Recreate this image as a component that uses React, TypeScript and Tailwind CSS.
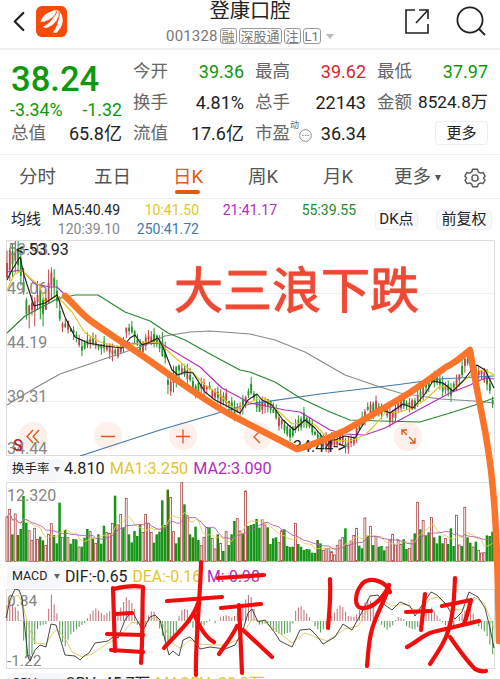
import { ChevronLeft } from "lucide-react";

type Point = [number, number];

const cjk = "font-[Roboto,'Noto_Sans_CJK_SC',sans-serif]";

const PITCH = 2.775;

// bar tops on a 0-258 scale, "r" = rising day, "g" = falling day
const volumes =
  "126r 103r 178g 117r 180g 162g 63g 143g 167r 196r 160r 193r 185g 196g 211r 178r 146r 180g 205g 83g 187r 165g 188r 206g 192g 193g 216r 215g 188g 162g 170r 188g 205r 178g 206g 152g 172r 175r 145r 62g 150r 118r 157g 70r 178g 202g 168g 183g 150g 172r 118r 146r 172r 203g 178g 170g 76g 150g 44g 67r 170r 205g 187g 23r 88g 122r 178g 187g 155g 195g 212r 187r 157r 158g 190r 222r 178g 205r 228g 170r 210g 178g 138g 131r 168r 175g 48r 153g 150g 147g 132g 158g 134r 150r 157g 207g 190g 187g 203r 167r 163g 213g 216g 215g 145r 207g 215g 225g 222g 223g 233g 234g 195g 205g 226r 221r 221r 230r 240r 211r 195r 188r 160g 211r 198r 181r 160r 212g 220g 129r 182g 154r 210g 184r 215g 213g 226g 216r 195r 178r 210r 196r 208r 193g 222g 220r 195r 175g 82r 163g 136r 183g 172g 128r 187g 205g 182g 205g 190r 207g 160g 213g 121r 210r 213g 97r 187g 203g 216r 200g 226r 234r 233r 181g 183g 170g"
    .split(" ")
    .map((v) => ({ top: parseInt(v, 10), up: v.endsWith("r") }));

const pricePath: Point[] = [
  [7, 270], [10, 260], [16, 255], [20, 262], [23, 282], [26, 304], [29, 308], [33, 308], [38, 296], [45, 308],
  [48, 295], [51, 280], [54, 280], [57, 296], [60, 316], [63, 328], [68, 326], [75, 336], [82, 346], [90, 342],
  [105, 345], [118, 354], [124, 342], [127, 328], [133, 332], [140, 350], [148, 338], [155, 338], [160, 346],
  [165, 355], [168, 385], [172, 385], [180, 368], [190, 378], [195, 390], [208, 387], [215, 396], [226, 400],
  [235, 413], [242, 406], [248, 392], [252, 390], [258, 407], [266, 402], [275, 413], [285, 430], [293, 432],
  [298, 423], [305, 418], [312, 430], [322, 441], [333, 443], [340, 438], [348, 447], [355, 437], [362, 420],
  [366, 412], [374, 406], [384, 410], [390, 416], [397, 410], [403, 400], [412, 405], [418, 400], [425, 387],
  [432, 376], [440, 383], [451, 392], [457, 382], [465, 362], [470, 358], [476, 370], [483, 373], [490, 388], [494, 406],
];

const averages: { color: string; points: Point[] }[] = [
  {
    color: "#888888",
    points: [[7, 405], [35, 388], [60, 374], [110, 357], [140, 347], [165, 336], [190, 332], [210, 331], [250, 334], [275, 340], [305, 352], [345, 375], [380, 387], [400, 393], [440, 399], [475, 401], [494, 403]],
  },
  {
    color: "#3f79ad",
    points: [[80, 456], [160, 430], [225, 411], [250, 404], [320, 394], [395, 385], [440, 379], [494, 376]],
  },
  {
    color: "#26882c",
    points: [[7, 333], [25, 316], [57, 299], [75, 295], [98, 295], [125, 312], [150, 321], [168, 333], [185, 340], [210, 354], [240, 370], [250, 372], [275, 382], [300, 398], [330, 412], [350, 420], [380, 421], [420, 422], [450, 413], [475, 405], [494, 398]],
  },
  {
    color: "#b52bc0",
    points: [[7, 272], [22, 270], [35, 284], [50, 287], [57, 287], [65, 295], [85, 314], [110, 335], [130, 343], [145, 344], [160, 343], [175, 352], [200, 367], [222, 388], [250, 403], [285, 410], [300, 412], [330, 430], [345, 434], [365, 435], [385, 428], [420, 409], [450, 393], [470, 385], [485, 378], [494, 379]],
  },
  {
    color: "#e2c51c",
    points: [[7, 290], [14, 275], [22, 270], [30, 278], [40, 286], [45, 302], [57, 296], [72, 312], [85, 333], [100, 342], [120, 347], [135, 344], [150, 342], [160, 343], [172, 355], [190, 370], [205, 385], [220, 395], [235, 410], [245, 405], [255, 400], [265, 398], [275, 408], [292, 424], [300, 423], [315, 425], [330, 440], [350, 441], [365, 435], [375, 425], [385, 413], [400, 412], [412, 408], [425, 400], [440, 386], [455, 388], [465, 380], [475, 371], [485, 370], [494, 375]],
  },
  {
    color: "#1c1c1c",
    points: [[7, 280], [12, 270], [20, 257], [24, 275], [34, 306], [45, 303], [57, 295], [65, 317], [75, 337], [88, 343], [105, 346], [122, 348], [130, 338], [135, 335], [142, 345], [150, 342], [158, 338], [163, 347], [172, 370], [178, 375], [185, 372], [193, 373], [205, 392], [215, 400], [225, 405], [240, 413], [248, 400], [257, 394], [262, 400], [272, 405], [283, 420], [294, 430], [305, 420], [315, 428], [325, 440], [335, 440], [345, 436], [355, 438], [362, 426], [372, 412], [380, 409], [390, 413], [403, 404], [413, 408], [425, 394], [433, 381], [443, 383], [453, 391], [463, 381], [470, 372], [477, 365], [485, 370], [494, 388]],
  },
];

const dif: Point[] = [
  [6, 618], [10, 600], [15, 589], [19, 590], [22, 598], [24, 620], [28, 657], [30, 661], [35, 650], [40, 645], [46, 647],
  [51, 624], [56, 625], [60, 638], [65, 655], [75, 656], [80, 660], [84, 656], [89, 653], [95, 643], [108, 641], [114, 636], [118, 638],
  [125, 620], [132, 611], [138, 622], [143, 630], [150, 617], [155, 615], [160, 620], [165, 640], [169, 655], [173, 651],
  [179, 656], [183, 640], [190, 637], [196, 643], [200, 649], [210, 647], [225, 649], [235, 645], [243, 630], [248, 613],
  [252, 609], [258, 622], [265, 620], [275, 633], [280, 641], [292, 647], [300, 630], [310, 629], [317, 636], [323, 644],
  [335, 637], [343, 624], [352, 630], [362, 612], [370, 596], [378, 595], [385, 605], [392, 610], [400, 602], [410, 606],
  [415, 616], [425, 601], [431, 592], [437, 595], [445, 603], [455, 619], [462, 612], [469, 592], [478, 597], [485, 608], [490, 628], [494, 648],
];

const dea: Point[] = [
  [6, 613], [12, 598], [18, 595], [22, 602], [28, 625], [35, 643], [46, 644], [52, 634], [57, 630], [64, 637], [72, 652], [82, 657],
  [92, 654], [105, 645], [120, 636], [132, 622], [143, 624], [155, 617], [163, 624], [172, 643], [180, 648], [190, 640], [200, 644],
  [212, 645], [225, 645], [240, 639], [252, 619], [262, 621], [275, 629], [292, 643], [305, 633], [318, 638], [327, 641], [345, 629],
  [358, 626], [370, 606], [380, 598], [392, 606], [405, 604], [416, 611], [430, 599], [438, 597], [450, 609], [462, 610], [474, 597], [484, 603], [494, 628],
];

// signed histogram heights around the zero line
const macdPath: Point[] = [
  [6, 16], [12, 18], [20, 8], [22, -8], [26, -36], [31, -38], [36, -18], [38, -5], [46, -3], [48, 8], [51, 28], [54, 17], [58, 4],
  [60, -16], [65, -26], [70, -14], [79, -6], [86, -1], [88, 4], [95, 13], [104, 6], [110, 10], [118, 8], [126, 24], [134, 16],
  [138, -7], [146, -6], [149, 8], [153, 11], [158, 3], [160, -10], [167, -24], [176, -12], [180, 10], [187, 13], [191, -6], [200, -9],
  [210, 2], [216, -3], [220, 4], [227, 6], [233, 3], [240, 12], [250, 29], [254, 12], [258, -4], [268, -2], [273, -9], [281, -14],
  [291, -11], [296, 12], [301, 15], [311, 2], [314, -4], [321, -12], [326, -4], [331, 4], [341, 17], [348, 5], [355, 4], [362, 15],
  [369, 23], [377, 7], [380, -2], [387, -9], [393, -4], [397, 4], [404, 2], [406, -5], [414, -9], [420, -4], [425, 8], [431, 14],
  [438, 4], [445, -4], [453, -8], [458, 3], [469, 15], [475, 4], [479, -6], [486, -12], [490, -24], [494, -38],
];

const strokes = [
  "M113 588 L115 651",
  "M114 589 C122 587 133 585 143 587 C142 610 143 638 141 663",
  "M115 614 L132 613",
  "M107 634 L143 635",
  "M111 650 L143 652",
  "M167 601 L222 597",
  "M201 562 C201 590 195 640 196 675",
  "M199 600 C194 620 176 634 164 648",
  "M195 616 C200 628 206 638 214 642",
  "M221 608 L261 604",
  "M239 605 L242 673",
  "M237 626 C232 637 225 645 219 654",
  "M243 630 L272 657",
  "M218 578 L264 575",
  "M330 579 C331 600 329 615 328 628",
  "M390 592 C386 581 370 576 362 584 C354 594 354 608 362 608 C374 609 385 595 389 585 C388 596 376 612 371 633 C368 647 368 658 367 666",
  "M425 594 L421 630",
  "M406 612 L431 611",
  "M407 647 C417 642 424 634 433 632 L479 621",
  "M442 606 L471 600 C469 608 467 616 464 624",
  "M455 578 C454 603 453 626 442 645 C438 652 434 658 430 664",
  "M450 637 C459 650 469 663 475 669 C479 671 482 672 486 671",
];

const valueAt = (path: Point[], x: number) => {
  const i = path.findIndex(([px]) => px >= x);
  if (i < 0) return path[path.length - 1][1];
  if (i === 0) return path[0][1];
  const [x0, y0] = path[i - 1];
  const [x1, y1] = path[i];
  return y0 + ((y1 - y0) * (x - x0)) / (x1 - x0);
};

const noise = (n: number) => {
  const v = Math.sin(n * 12.9898) * 43758.5453;
  return v - Math.floor(v);
};

const toLine = (points: Point[]) => points.map((p) => p.join(",")).join(" ");

const movingAverage = (size: number): Point[] =>
  volumes.map((_, i) => {
    const part = volumes.slice(Math.max(0, i - size + 1), i + 1);
    const mean = part.reduce((sum, v) => sum + v.top, 0) / part.length;
    return [7 + i * PITCH, 475 + mean / 3];
  });

function Quote({ label, value, color }: { label: React.ReactNode; value: string; color: string }) {
  return (
    <div className="flex h-[31px] items-center justify-between whitespace-nowrap">
      <span className="flex items-center text-[17.5px] text-[#666]">{label}</span>
      <span className={value.length > 6 ? "text-[17.2px]" : "text-[18px]"} style={{ color }}>
        {value}
      </span>
    </div>
  );
}

function Tag({ children }: { children: string }) {
  return (
    <span className="flex h-4 items-center rounded-[3px] border border-[#999] px-px text-[13px] leading-none text-[#777]">
      {children}
    </span>
  );
}

function IndicatorPicker({ name }: { name: string }) {
  return (
    <div className="flex h-[22px] w-[57px] items-center justify-between rounded bg-[#f6f7fa] pr-1 pl-[5px] text-[12.5px] text-[#222]">
      <span>{name}</span>
      <span className="border-x-[3px] border-t-[5px] border-x-transparent border-t-[#666]" />
    </div>
  );
}

function Header() {
  return (
    <header className="flex h-[50px] shrink-0 justify-between border-b-2 border-[#eee] pl-[2px]">
      <div className="flex h-[42px] w-[158px] items-center">
        <ChevronLeft className="h-[37px] w-[34px] text-[#222]" strokeWidth={1.6} />
        <svg className="h-[31px] w-[31px]" viewBox="0 0 31 31">
          <rect width="31" height="31" rx="6" fill="#fa4a09" />
          <path d="M20 4 C11 6 6 10 4.500 16 C10 16 15 13 18 9.500 C16 15 12 18.500 7 20.500 C8 22.500 10 22 12 21.500 C18 18.500 21 15 22 10.500 C22.500 17 20.500 22 17 26 C19 28 21 27 22 25 C27 20 28 13 25 8 C24 5.500 22 4 20 4Z" fill="#fff" />
          <path d="M20 4.500 C21 7 19.500 9 17.500 11 M23 5.500 C23.500 9 23 12 21.500 15" stroke="#fa4a09" fill="none" />
        </svg>
      </div>
      <div className="flex w-[180px] flex-col items-center">
        <h1 className="h-[24px] text-[20.3px] leading-[22px] text-[#222]">登康口腔</h1>
        <div className="flex h-6 items-center gap-[2px] whitespace-nowrap">
          <span className="text-[15px] tracking-[0.15px] text-[#777]">001328</span>
          <Tag>融</Tag>
          <Tag>深股通</Tag>
          <Tag>注</Tag>
          <Tag>L1</Tag>
          <span className="ml-[3px] border-x-4 border-t-[5px] border-x-transparent border-t-[#bbb]" />
        </div>
      </div>
      <div className="flex h-[42px] w-[160px] items-center justify-end gap-[24px] pr-[13px]">
        <svg className="h-7 w-7" viewBox="0 0 28 28" fill="none" stroke="#222" strokeWidth="1.6">
          <path d="M12 3H3V26H25V17M16 3H25V12M25 3L13 16" />
        </svg>
        <svg className="h-8 w-8" viewBox="0 0 32 32" fill="none" stroke="#222" strokeWidth="1.8">
          <circle cx="15" cy="15" r="12.6" />
          <path d="M24 24L30 30" />
        </svg>
      </div>
    </header>
  );
}

function QuotePanel() {
  return (
    <section className="flex h-[105px] shrink-0 border-b border-[#eee] pl-[11px]">
      <div className="w-[111px] pt-[9px]">
        <div className="h-[40px] text-[34.6px] leading-[40px] font-medium text-[#0d980d]">38.24</div>
        <div className="-ml-px flex h-[19px] items-center justify-between pt-[3px] text-[17.8px] text-[#0d980d]">
          <span>-3.34%</span>
          <span>-1.32</span>
        </div>
        <Quote label="总值" value="65.8亿" color="#222" />
      </div>
      <div className="ml-[11px] w-[111px] pt-[6px]">
        <Quote label="今开" value="39.36" color="#0d980d" />
        <Quote label="换手" value="4.81%" color="#222" />
        <Quote label="流值" value="17.6亿" color="#222" />
      </div>
      <div className="ml-[11px] w-[111px] pt-[6px]">
        <Quote label="最高" value="39.62" color="#da1f2c" />
        <Quote label="总手" value="22143" color="#222" />
        <Quote
          label={
            <>
              市盈
              <span className="-mt-4 text-[9px]">动</span>
              <svg className="mt-1 h-[13px] w-[13px]" viewBox="0 0 13 13">
                <circle cx="6.5" cy="6.5" r="5.8" fill="none" stroke="#888" />
                <path d="M3 6.5h1.5M5.8 6.5h1.5M8.6 6.5h1.5" stroke="#888" strokeWidth="1.2" />
              </svg>
            </>
          }
          value="36.34"
          color="#222"
        />
      </div>
      <div className="ml-[11px] w-[111px] pt-[6px]">
        <Quote label="最低" value="37.97" color="#0d980d" />
        <Quote label="金额" value="8524.8万" color="#222" />
        <button className="mt-[3px] ml-auto block h-6 w-[53px] rounded-sm border border-[#eee] text-[15px] leading-[20px] text-[#222]">
          更多
        </button>
      </div>
    </section>
  );
}

function PeriodTabs() {
  return (
    <nav className="flex h-[44px] shrink-0 items-center border-b border-[#eee] pt-[3px] text-[18.5px] text-[#555]">
      <span className="w-[75px] text-center">分时</span>
      <span className="w-[75px] text-center">五日</span>
      <span className="relative w-[76px] text-center text-[#e05a0f]">
        日K
        <span className="absolute -bottom-[2px] left-[25px] h-[3.5px] w-[25px] rounded-full bg-[#e05a0f]" />
      </span>
      <span className="w-[74px] text-center">周K</span>
      <span className="w-[76px] text-center">月K</span>
      <span className="ml-[18px] flex items-center">
        更多
        <span className="ml-1 border-x-[3.5px] border-t-[6px] border-x-transparent border-t-[#555]" />
      </span>
      <svg className="ml-[23px] h-[22px] w-[22px]" viewBox="0 0 24 24" fill="none" stroke="#555" strokeWidth="1.5" strokeLinejoin="round">
        <path d="M9.3 2.500 H14.7 L15.600 5.400 L18 6.700 L20.900 6 L23 10 L21.200 12 L23 14.500 L20.600 18.200 L18 17.400 L15.600 18.700 L14.700 21.500 H9.300 L8.400 18.700 L6 17.400 L3.400 18.200 L1 14.500 L2.800 12 L1 10 L3.100 6 L6 6.700 L8.400 5.400Z" />
        <circle cx="12" cy="12" r="3.4" />
      </svg>
    </nav>
  );
}

function AverageRow() {
  return (
    <section className="flex h-[41px] shrink-0 items-center pl-[11px] text-[14px]">
      <span className="w-[31px] text-[15px] whitespace-nowrap text-[#222]">均线</span>
      <div className="ml-[10px] grid grid-cols-[68px_79px_78px_79px] text-right leading-[19px]">
        <span className="text-[#222]">MA5:40.49</span>
        <span className="text-[#dfc62d]">10:41.50</span>
        <span className="text-[#b52bc0]">21:41.17</span>
        <span className="text-[#26882c]">55:39.55</span>
        <span className="text-[#888]">120:39.10</span>
        <span className="text-[#3f79ad]">250:41.72</span>
      </div>
      <span className="ml-[19px] flex h-5 w-[43px] items-center justify-center rounded border border-[#eef0f5] bg-[#fafafd] text-[15px] whitespace-nowrap text-[#222]">
        DK点
      </span>
      <span className="ml-[18px] flex h-5 w-[56px] items-center justify-center rounded border border-[#eef0f5] bg-[#fafafd] text-[15px] text-[#222]">
        前复权
      </span>
    </section>
  );
}

function CandleChart() {
  return (
    <svg className="block h-[216px] w-full shrink-0" viewBox="0 240 500 216">
      <path d="M6.5 240V456M494.5 240V456M6 240.5H495M6 455.5H495" stroke="#ddd" />
      <path d="M6 293.5H494M6 347.5H494M6 401.5H494" stroke="#f1f1f1" />
      <g fill="#fdf0eb">
        <circle cx="33" cy="436" r="14" />
        <circle cx="108" cy="436" r="14" />
        <circle cx="183" cy="436" r="14" />
        <circle cx="258" cy="436" r="14" />
        <circle cx="408" cy="437" r="14" />
      </g>
      {volumes.map(({ up }, i) => {
        const x = 7 + i * PITCH;
        const y = valueAt(pricePath, x) + (noise(i + 3) - 0.5) * 5;
        const volatile = x < 62 ? 1.9 : x > 160 && x < 180 ? 1.4 : 0.9;
        const body = (1.5 + noise(i + 40) * 4) * volatile;
        const high = y - body - noise(i + 90) * 8 * volatile;
        const low = y + body + noise(i + 170) * 8 * volatile;
        const color = up ? "#c5434b" : "#21942a";
        return (
          <g key={i}>
            <path d={`M${x} ${Math.max(high, 241)}V${Math.min(low, 455)}`} stroke={color} strokeWidth="1" />
            <rect x={x - 0.9} y={y - body} width="1.8" height={body * 2} fill={color} />
          </g>
        );
      })}
      <g fontSize="16" fill="#858585">
        <text x="8" y="255">53.93</text>
        <text x="7" y="294">49.06</text>
        <text x="7" y="348">44.19</text>
        <text x="7" y="402">39.31</text>
        <text x="7" y="454">34.44</text>
      </g>
      {averages.map(({ color, points }) => (
        <polyline key={color} points={toLine(points)} fill="none" stroke={color} strokeWidth="1.1" strokeLinejoin="round" />
      ))}
      <g fontSize="16" fill="#222">
        <text x="16" y="255">&lt;-53.93</text>
        <text x="293" y="452">34.44-&gt;</text>
      </g>
      <text x="13" y="451" fontSize="16" fontWeight="500" fill="#b6232b">S</text>
      <g fill="none" stroke="#df5716" strokeWidth="1.3">
        <path d="M33 430L27 436.5L33 443M39 430L33 436.5L39 443" />
        <path d="M101 436.5H115M176 436.5H190M183 429.500V443.500" />
        <path d="M260 431L254 437L260 443" />
        <path d="M402 435V430H407M402 430L407 435M409 437L415 443M415 438V443H410" />
      </g>
    </svg>
  );
}

function VolumeChart() {
  return (
    <svg className="block h-[80px] w-full shrink-0" viewBox="0 482 500 80">
      <path d="M6.500 562V482.500H494.500V562" fill="none" stroke="#ddd" />
      {volumes.map(({ top, up }, i) => {
        const x = 5.6 + i * PITCH;
        const y = 475 + top / 3;
        return up ? (
          <rect key={i} x={x + 0.35} y={y} width="1.9" height={561.3 - y} fill="#fff" stroke="#a94343" strokeWidth="0.8" />
        ) : (
          <rect key={i} x={x} y={y} width="2.5" height={561.5 - y} fill={i % 9 === 4 ? "#47750d" : "#149718"} />
        );
      })}
      <text x="7" y="501" fontSize="16" fill="#858585">12.320</text>
      <polyline points={toLine(movingAverage(7))} fill="none" stroke="#e5cd51" strokeWidth="0.9" />
      <polyline points={toLine(movingAverage(13))} fill="none" stroke="#b35aac" strokeWidth="0.9" />
    </svg>
  );
}

function MacdChart() {
  return (
    <svg className="block h-[80px] w-full shrink-0" viewBox="0 589 500 80">
      <rect x="6.5" y="589.5" width="488" height="79" fill="none" stroke="#ddd" />
      {volumes.map((_, i) => {
        const x = 7 + i * PITCH;
        const h = valueAt(macdPath, x);
        return <path key={i} d={`M${x} 621V${621 - h}`} stroke={h > 0 ? "#c37880" : "#5ba35d"} strokeWidth="1.1" />;
      })}
      <g fontSize="15.5" fill="#858585">
        <text x="7" y="606">0.84</text>
        <text x="7" y="666">-1.22</text>
      </g>
      <polyline points={toLine(dea)} fill="none" stroke="#dcc958" strokeWidth="0.9" />
      <polyline points={toLine(dif)} fill="none" stroke="#333" strokeWidth="0.9" />
    </svg>
  );
}

// freehand marks the user scribbled over the charts
function Annotations() {
  return (
    <div className="pointer-events-none absolute inset-0">
      <svg className="h-full w-full" viewBox="0 0 500 679" fill="none" strokeLinecap="round" strokeLinejoin="round">
        <path
          d="M65 296 C75 305 81 314 91 321 C112 336 133 349 150 361 C180 382 206 402 235 417 L297 449 C314 445 330 437 346 430 L396 401 C414 391 431 378 446 367 C455 363 461 357 470 350 C474 375 478 395 482 415 C487 440 491 465 493 490 C496 520 497 550 498 590 L499 641"
          stroke="#fb7429"
          strokeWidth="6.5"
        />
        {strokes.map((d) => (
          <path key={d} d={d} stroke="#f20d0d" strokeWidth="4.2" />
        ))}
      </svg>
      <span className="absolute top-[256px] left-[174px] text-[49px] leading-[72px] font-normal whitespace-nowrap text-[#ee4935] [-webkit-text-stroke:0.9px_#ee4935] [text-shadow:0_0_2px_#f5a58d]">
        大三浪下跌
      </span>
    </div>
  );
}

export default function App() {
  return (
    <main className={`relative flex h-[679px] w-[500px] flex-col overflow-hidden bg-white ${cjk}`}>
      <Header />
      <QuotePanel />
      <PeriodTabs />
      <AverageRow />
      <CandleChart />
      <div className="flex h-[26px] shrink-0 items-center pt-px pl-[7px] text-[16.2px] whitespace-nowrap">
        <IndicatorPicker name="换手率" />
        <span className="text-[#222]">4.810</span>
        <span className="ml-[5px] text-[#dfc62d]">MA1:3.250</span>
        <span className="ml-[5px] text-[#b52bc0]">MA2:3.090</span>
      </div>
      <VolumeChart />
      <div className="flex h-[27px] shrink-0 items-center pt-[2px] pl-[7px] text-[15.8px] whitespace-nowrap">
        <IndicatorPicker name="MACD" />
        <span className="ml-px text-[#222]">DIF:-0.65</span>
        <span className="ml-[5px] text-[#dfc62d]">DEA:-0.16</span>
        <span className="ml-[6px] text-[#b52bc0]">M:-0.98</span>
      </div>
      <MacdChart />
      <div className="flex h-[28px] shrink-0 items-center pt-px pl-[7px] text-[15.8px] whitespace-nowrap">
        <IndicatorPicker name="OBV" />
        <span className="ml-px text-[#222]">OBV:-45.7万</span>
        <span className="ml-[5px] text-[#dfc62d]">MAOBV:-30.2万</span>
      </div>
      <Annotations />
    </main>
  );
}
